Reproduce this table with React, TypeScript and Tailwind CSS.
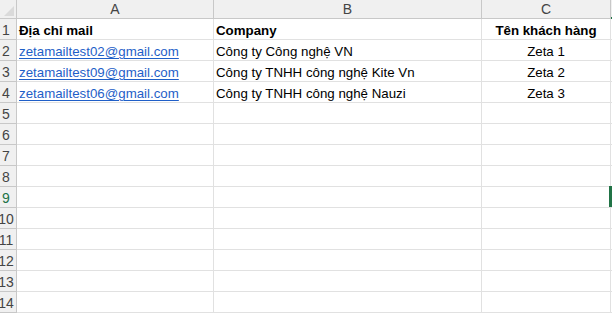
const rows: [string, string, string][] = [
  ["Địa chỉ mail", "Company", "Tên khách hàng"],
  ["zetamailtest02@gmail.com", "Công ty Công nghệ VN", "Zeta 1"],
  ["zetamailtest09@gmail.com", "Công ty TNHH công nghệ Kite Vn", "Zeta 2"],
  ["zetamailtest06@gmail.com", "Công ty TNHH công nghệ Nauzi", "Zeta 3"],
];

const cols = "grid grid-cols-[17px_197px_268px_129px_1fr]";
const cell = "flex items-end whitespace-nowrap border-r border-b border-[#e1e1e1] pb-[1px] leading-[15px]";

export default function App() {
  const body = Array.from({ length: 14 }, (_, i) => rows[i] ?? ["", "", ""]);

  return (
    <div className="h-[313px] w-[612px] overflow-hidden bg-white font-['Liberation_Sans',Arial,sans-serif] text-[13.3px] text-black">
      <div className={`${cols} h-[19px] bg-[#f0f0f0] text-[#444]`}>
        <div className="relative border-r border-b border-[#c8c8c8]">
          <svg className="absolute right-[2px] bottom-[2px]" width="10" height="10" viewBox="0 0 10 10">
            <polygon points="10,0 10,10 0,10" fill="#dadada" />
          </svg>
        </div>
        {["A", "B", "C"].map((c) => (
          <div key={c} className="flex items-center justify-center border-r border-b border-[#c8c8c8] text-[14px] leading-none">
            {c}
          </div>
        ))}
        <div className="border-b-2 border-[#217346]" />
      </div>
      {body.map((r, i) => {
        const n = i + 1;
        const sel = n === 9;
        return (
          <div key={n} className={`${cols} h-[21px]`}>
            <div className="flex items-center border-r border-b border-[#c8c8c8] bg-[#f0f0f0] pt-[1px]">
              <div className={`flex w-[12px] justify-center text-[14px] leading-none ${sel ? "text-[#217346]" : "text-[#444]"}`}>{n}</div>
            </div>
            <div className={`${cell} pl-[2px]`}>
              {n === 1 ? (
                <span className="font-bold">{r[0]}</span>
              ) : r[0] ? (
                <span className="text-[#1f5fc8] underline decoration-1 underline-offset-[2px]">{r[0]}</span>
              ) : null}
            </div>
            <div className={`${cell} pl-[2px]`}>
              <span className={n === 1 ? "font-bold" : ""}>{r[1]}</span>
            </div>
            <div className={`${cell} justify-center`}>
              <span className={n === 1 ? "font-bold" : ""}>{r[2]}</span>
            </div>
            <div className="relative border-b border-[#e1e1e1]">
              {sel && <div className="absolute top-[-1px] bottom-0 left-[-2px] w-[3px] bg-[#217346]" />}
            </div>
          </div>
        );
      })}
    </div>
  );
}
